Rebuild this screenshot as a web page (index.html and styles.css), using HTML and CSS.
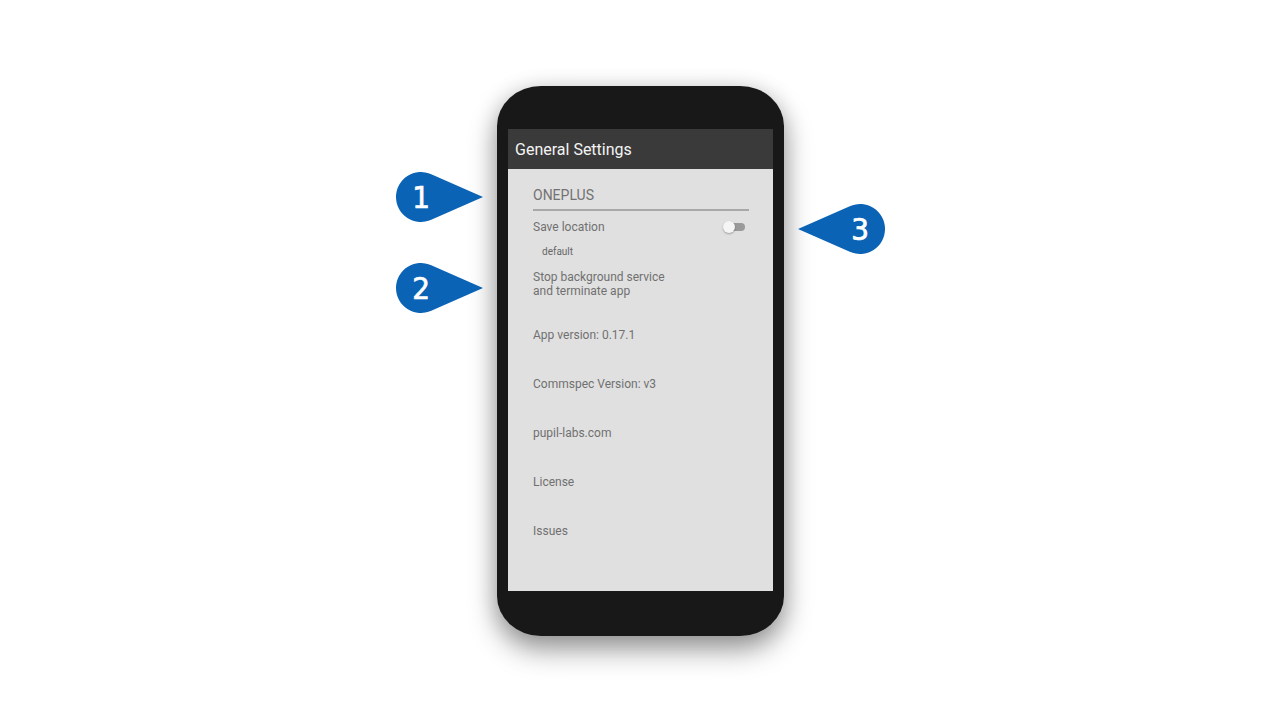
FILE: index.html
```html
<!DOCTYPE html>
<html>
<head>
<meta charset="utf-8">
<link rel="stylesheet" href="styles.css">
</head>
<body>
<div class="stage">
  <div class="phone">
    <div class="bezel-top"></div>
    <div class="screen">
      <div class="appbar">General Settings</div>
      <div class="content">
        <div class="category">ONEPLUS</div>
        <div class="row">
          <span class="label">Save location</span>
          <span class="toggle"><span class="track"></span><span class="knob"></span></span>
        </div>
        <div class="sub">default</div>
        <div class="label multi">Stop background service<br>and terminate app</div>
        <div class="item first">App version: 0.17.1</div>
        <div class="item">Commspec Version: v3</div>
        <div class="item">pupil-labs.com</div>
        <div class="item">License</div>
        <div class="item">Issues</div>
      </div>
    </div>
    <div class="bezel-bottom"></div>
  </div>

  <svg class="marker m1" width="88" height="50" viewBox="0 0 88 50">
    <path d="M87 25 L35.25 2.2 A25 25 0 1 0 35.25 47.8 Z" fill="#0b63b6"/>
    <text x="25" y="36" text-anchor="middle">1</text>
  </svg>
  <svg class="marker m2" width="88" height="50" viewBox="0 0 88 50">
    <path d="M87 25 L35.25 2.2 A25 25 0 1 0 35.25 47.8 Z" fill="#0b63b6"/>
    <text x="25" y="36" text-anchor="middle">2</text>
  </svg>
  <svg class="marker m3" width="88" height="50" viewBox="0 0 88 50">
    <path d="M1 25 L52.75 2.2 A25 25 0 1 1 52.75 47.8 Z" fill="#0b63b6"/>
    <text x="63" y="36" text-anchor="middle">3</text>
  </svg>
</div>
</body>
</html>
```

FILE: styles.css
```css
html, body {
  margin: 0;
  padding: 0;
  background: #ffffff;
}
body {
  font-family: Roboto, "Liberation Sans", sans-serif;
}
.stage {
  position: relative;
  width: 1281px;
  height: 721px;
  display: flex;
  align-items: center;
  justify-content: center;
  overflow: hidden;
}
.phone {
  width: 287px;
  height: 550px;
  background: #181818;
  border-radius: 44px / 40px;
  display: flex;
  flex-direction: column;
  align-items: center;
  box-shadow: 0 14px 28px rgba(0,0,0,0.38), 0 2px 22px rgba(0,0,0,0.14);
}
.bezel-top {
  height: 43px;
  flex: none;
}
.bezel-bottom {
  height: 45px;
  flex: none;
}
.screen {
  width: 265px;
  height: 462px;
  background: #e0e0e0;
  display: flex;
  flex-direction: column;
}
.appbar {
  height: 39px;
  background: #3a3a3a;
  color: #f4f4f4;
  font-size: 16px;
  line-height: 39px;
  padding-top: 1px;
  padding-left: 7px;
  flex: none;
}
.content {
  padding: 17px 24px 0 25px;
  color: #707070;
}
.category {
  font-size: 14px;
  line-height: 18px;
  color: #727272;
  padding-bottom: 5px;
  border-bottom: 2px solid #a8a8a8;
}
.row {
  margin-top: 8px;
  display: flex;
  align-items: center;
  justify-content: space-between;
  height: 16px;
}
.label {
  font-size: 12px;
  line-height: 16px;
}
.multi {
  line-height: 14px;
  margin-top: 11px;
}
.sub {
  margin-top: 10px;
  padding-left: 9px;
  font-size: 10px;
  line-height: 14px;
  color: #666;
}
.toggle {
  position: relative;
  width: 22px;
  height: 14px;
  margin-right: 4px;
}
.track {
  position: absolute;
  left: 3px;
  top: 3px;
  width: 19px;
  height: 8px;
  border-radius: 4px;
  background: #9a9a9a;
}
.knob {
  position: absolute;
  left: 0;
  top: 1px;
  width: 12px;
  height: 12px;
  border-radius: 50%;
  background: #f5f5f5;
  box-shadow: 0 1px 2px rgba(0,0,0,0.3);
}
.item {
  font-size: 12px;
  line-height: 16px;
  margin-top: 33px;
}
.item.first {
  margin-top: 29px;
}
.marker {
  position: absolute;
}
.marker text {
  font-family: "DejaVu Sans Condensed", "DejaVu Sans", sans-serif;
  font-size: 31px;
  fill: #ffffff;
  stroke: #ffffff;
  stroke-width: 0.7px;
}
.m1 { left: 396px; top: 172px; }
.m2 { left: 396px; top: 263px; }
.m3 { left: 797px; top: 204px; }
```
